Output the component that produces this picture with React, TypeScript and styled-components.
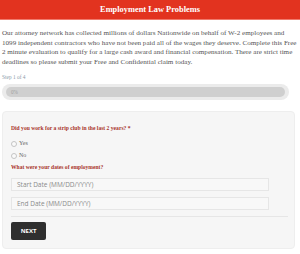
import React from "react";
import styled, { createGlobalStyle } from "styled-components";

const GlobalStyle = createGlobalStyle`
    html, body {
        margin: 0;
        padding: 0;
        background: #fff;
    }
`;

const Page = styled.div`
    width: 300px;
    height: 254px;
    overflow: hidden;
    font-family: "Liberation Serif", "DejaVu Serif", serif;
`;

const Header = styled.h1`
    margin: 0;
    height: 20px;
    background: #e2331f;
    border-bottom: 1px solid #f07a6c;
    box-sizing: border-box;
    color: #fff;
    font-size: 8.4px;
    font-weight: bold;
    display: flex;
    align-items: center;
    justify-content: center;
`;

const Body = styled.div`
    padding: 0 4px 0 2px;
`;

const Intro = styled.p`
    margin: 9px 0 0 0;
    font-size: 7.1px;
    line-height: 9.5px;
    color: #555;
    white-space: nowrap;
`;

const StepLabel = styled.div`
    margin-top: 7px;
    font-size: 5.4px;
    line-height: 6px;
    color: #8a9aa8;
`;

const ProgressOuter = styled.div`
    margin-top: 4px;
    width: 287px;
    height: 16px;
    box-sizing: border-box;
    padding: 3px 4px;
    border-radius: 8px;
    background: #ebebeb;
`;

const ProgressInner = styled.div`
    height: 10px;
    border-radius: 5px;
    background: #cfcfcf;
    display: flex;
    align-items: center;
    padding-left: 5px;
    font-size: 5.2px;
    color: #a0a0a0;
`;

const Panel = styled.div`
    margin-top: 11px;
    width: 293px;
    box-sizing: border-box;
    padding: 13px 8px 8px 8px;
    background: #f6f6f6;
    border: 1px solid #eeeeee;
    border-radius: 4px;
`;

const Question = styled.div`
    font-size: 5.6px;
    line-height: 7px;
    font-weight: bold;
    color: #a8332b;
`;

const RadioRow = styled.label<{ $first?: boolean }>`
    display: flex;
    align-items: center;
    gap: 2px;
    margin-top: ${(p) => (p.$first ? "8px" : "5px")};
    font-size: 6px;
    line-height: 7px;
    color: #666;
`;

const Dot = styled.span`
    width: 4px;
    height: 4px;
    border-radius: 50%;
    border: 1px solid #c4c4c4;
    background: #fafafa;
`;

const DatesLabel = styled(Question)`
    margin-top: 5px;
`;

const DateInput = styled.div<{ $first?: boolean }>`
    margin-top: ${(p) => (p.$first ? "7px" : "6px")};
    width: 258px;
    height: 13px;
    box-sizing: border-box;
    border: 1px solid #e6e6e6;
    background: #f8f8f8;
    display: flex;
    align-items: center;
    padding-left: 5px;
    font-family: "Open Sans", sans-serif;
    font-size: 6.5px;
    color: #8a8a8a;
`;

const Divider = styled.hr`
    margin: 6px 0 0 0;
    width: 277px;
    border: 0;
    border-top: 1px solid #e6e6e6;
`;

const NextButton = styled.button`
    margin-top: 5px;
    width: 35px;
    height: 18px;
    border: 0;
    border-radius: 2px;
    background: #2f2f2f;
    color: #fff;
    font-family: "Open Sans", sans-serif;
    font-weight: bold;
    font-size: 6px;
    padding: 0;
`;

export default function App() {
    return (
        <>
            <GlobalStyle />
            <Page>
                <Header>Employment Law Problems</Header>
                <Body>
                    <Intro>
                        Our attorney network has collected millions of dollars Nationwide on behalf of W-2 employees and
                        <br />
                        1099 independent contractors who have not been paid all of the wages they deserve. Complete this Free
                        <br />
                        2 minute evaluation to qualify for a large cash award and financial compensation. There are strict time
                        <br />
                        deadlines so please submit your Free and Confidential claim today.
                    </Intro>
                    <StepLabel>Step 1 of 4</StepLabel>
                    <ProgressOuter>
                        <ProgressInner>0%</ProgressInner>
                    </ProgressOuter>
                    <Panel>
                        <Question>Did you work for a strip club in the last 2 years? *</Question>
                        <RadioRow $first>
                            <Dot />
                            Yes
                        </RadioRow>
                        <RadioRow>
                            <Dot />
                            No
                        </RadioRow>
                        <DatesLabel>What were your dates of employment?</DatesLabel>
                        <DateInput $first>Start Date (MM/DD/YYYY)</DateInput>
                        <DateInput>End Date (MM/DD/YYYY)</DateInput>
                        <Divider />
                        <NextButton>NEXT</NextButton>
                    </Panel>
                </Body>
            </Page>
        </>
    );
}
